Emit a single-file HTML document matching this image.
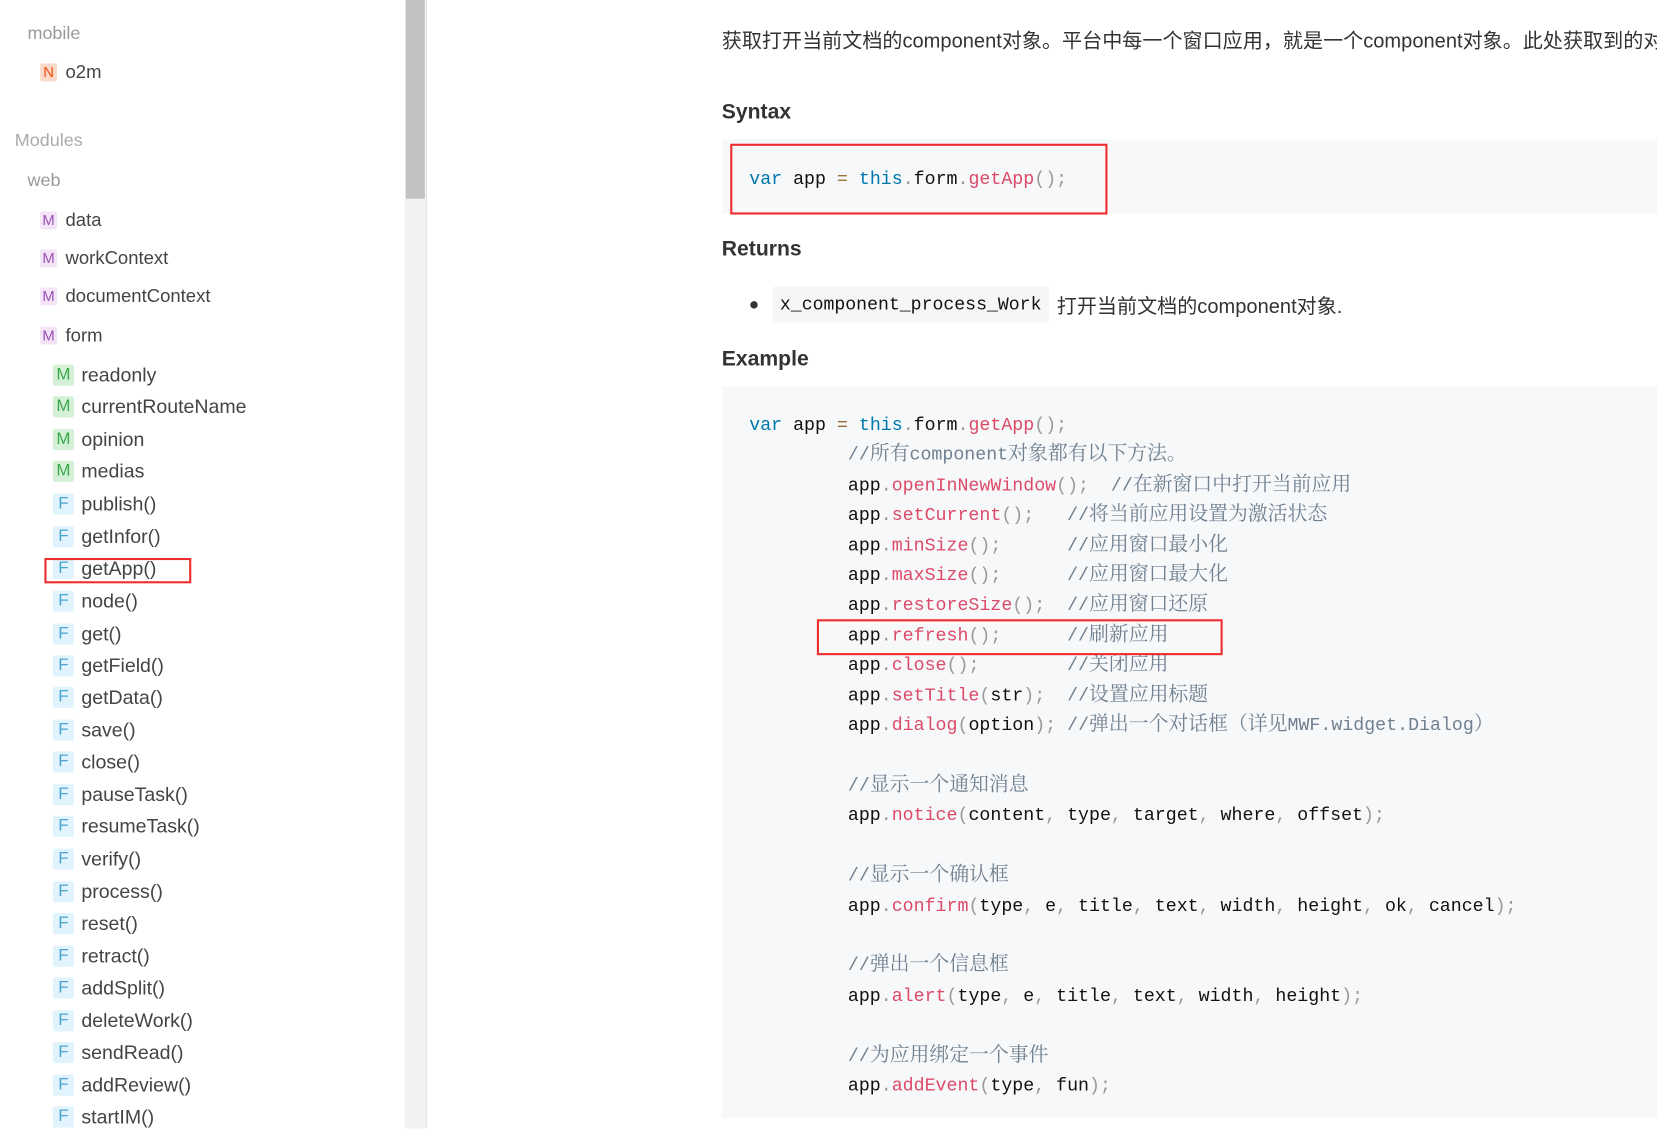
<!DOCTYPE html>
<html><head><meta charset="utf-8"><style>
html,body{margin:0;padding:0;background:#fff;overflow:hidden;width:1657px;height:1128px}
#w{position:absolute;left:0;top:0;width:1568px;height:1068px;transform:scale(1.05676);transform-origin:0 0;font-family:"Liberation Sans","Noto Sans CJK SC",sans-serif;color:#333;overflow:hidden}
.a{position:absolute;white-space:nowrap}
.g{color:#999;font-size:17px}
.it{font-size:17.5px;color:#444}
.ic{position:absolute;width:16px;height:17px;border-radius:2px;font-size:14px;text-align:center;line-height:17px}
.ic.m{background:#f3e5f7;color:#9c4fb6}
.ic.n{background:#fbd9c9;color:#ee4d0f}
.sub{font-size:18.5px;color:#444}
.ic2{position:absolute;width:20px;height:20px;border-radius:2px;font-size:16px;text-align:center;line-height:20px}
.ic2.g2{background:#d4f0d6;color:#3aa84a}
.ic2.f{background:#e1f4fd;color:#4ba3cf}
.rb{position:absolute;border:2px solid #ee2e2e;box-sizing:border-box}
.h{font-weight:bold;font-size:20px;color:#333}
pre,code{font-family:"Liberation Mono","Noto Sans CJK SC",monospace;margin:0}
.blk{position:absolute;left:683px;right:0;background:#f6f8fa}
pre.a{font-size:17.3px;line-height:28.4px;color:#111;white-space:pre}
.k{color:#0077aa}.f1{color:#dd4a68}.p{color:#999}.o{color:#9a6e3a}
.c{color:#708090;font-family:"Liberation Mono","Noto Serif CJK SC",serif;line-height:0}
.cj{font-family:"Noto Serif CJK SC",serif;font-size:18.8px;line-height:0}
</style></head><body><div id="w">
<!-- sidebar -->
<div class="a g" style="left:26px;top:22px">mobile</div>
<div class="ic n" style="left:38px;top:60px">N</div><div class="a it" style="left:62px;top:58px">o2m</div>
<div class="a g" style="left:14px;top:123px;color:#aaa">Modules</div>
<div class="a g" style="left:26px;top:161px">web</div>
<div class="ic m" style="left:38px;top:200px">M</div><div class="a it" style="left:62px;top:198px">data</div>
<div class="ic m" style="left:38px;top:236px">M</div><div class="a it" style="left:62px;top:234px">workContext</div>
<div class="ic m" style="left:38px;top:272px">M</div><div class="a it" style="left:62px;top:270px">documentContext</div>
<div class="ic m" style="left:38px;top:309px">M</div><div class="a it" style="left:62px;top:307px">form</div>

<div class="ic2 g2" style="left:50px;top:345px">M</div><div class="a sub" style="left:77px;top:344px">readonly</div>
<div class="ic2 g2" style="left:50px;top:375px">M</div><div class="a sub" style="left:77px;top:374px">currentRouteName</div>
<div class="ic2 g2" style="left:50px;top:406px">M</div><div class="a sub" style="left:77px;top:405px">opinion</div>
<div class="ic2 g2" style="left:50px;top:436px">M</div><div class="a sub" style="left:77px;top:435px">medias</div>
<div class="ic2 f" style="left:50px;top:467px">F</div><div class="a sub" style="left:77px;top:466px">publish()</div>
<div class="ic2 f" style="left:50px;top:498px">F</div><div class="a sub" style="left:77px;top:497px">getInfor()</div>
<div class="ic2 f" style="left:50px;top:528px">F</div><div class="a sub" style="left:77px;top:527px">getApp()</div>
<div class="ic2 f" style="left:50px;top:559px">F</div><div class="a sub" style="left:77px;top:558px">node()</div>
<div class="ic2 f" style="left:50px;top:590px">F</div><div class="a sub" style="left:77px;top:589px">get()</div>
<div class="ic2 f" style="left:50px;top:620px">F</div><div class="a sub" style="left:77px;top:619px">getField()</div>
<div class="ic2 f" style="left:50px;top:650px">F</div><div class="a sub" style="left:77px;top:649px">getData()</div>
<div class="ic2 f" style="left:50px;top:681px">F</div><div class="a sub" style="left:77px;top:680px">save()</div>
<div class="ic2 f" style="left:50px;top:711px">F</div><div class="a sub" style="left:77px;top:710px">close()</div>
<div class="ic2 f" style="left:50px;top:742px">F</div><div class="a sub" style="left:77px;top:741px">pauseTask()</div>
<div class="ic2 f" style="left:50px;top:772px">F</div><div class="a sub" style="left:77px;top:771px">resumeTask()</div>
<div class="ic2 f" style="left:50px;top:803px">F</div><div class="a sub" style="left:77px;top:802px">verify()</div>
<div class="ic2 f" style="left:50px;top:834px">F</div><div class="a sub" style="left:77px;top:833px">process()</div>
<div class="ic2 f" style="left:50px;top:864px">F</div><div class="a sub" style="left:77px;top:863px">reset()</div>
<div class="ic2 f" style="left:50px;top:895px">F</div><div class="a sub" style="left:77px;top:894px">retract()</div>
<div class="ic2 f" style="left:50px;top:925px">F</div><div class="a sub" style="left:77px;top:924px">addSplit()</div>
<div class="ic2 f" style="left:50px;top:956px">F</div><div class="a sub" style="left:77px;top:955px">deleteWork()</div>
<div class="ic2 f" style="left:50px;top:986px">F</div><div class="a sub" style="left:77px;top:985px">sendRead()</div>
<div class="ic2 f" style="left:50px;top:1017px">F</div><div class="a sub" style="left:77px;top:1016px">addReview()</div>
<div class="ic2 f" style="left:50px;top:1047px">F</div><div class="a sub" style="left:77px;top:1046px">startIM()</div>
<div class="rb" style="left:42px;top:528px;width:139px;height:24px"></div>
<!-- scrollbar -->
<div class="a" style="left:383px;top:0;width:20px;height:1068px;background:#f1f1f1;border-right:1px solid #e4e4e4"></div>
<div class="a" style="left:384px;top:0;width:18px;height:188px;background:#c1c1c1"></div>

<!-- content -->
<div class="a" style="left:683px;top:24px;font-size:19px;color:#333;width:885px;overflow:hidden">获取打开当前文档的component对象。平台中每一个窗口应用，就是一个component对象。此处获取到的对象可以调用</div>
<div class="a h" style="left:683px;top:95px">Syntax</div>
<div class="blk" style="top:132px;height:70px"></div>
<pre class="a" style="left:709px;top:157px"><span class="k">var</span> app <span class="o">=</span> <span class="k">this</span><span class="p">.</span>form<span class="p">.</span><span class="f1">getApp</span><span class="p">();</span></pre>
<div class="rb" style="left:691px;top:136px;width:357px;height:67px"></div>
<div class="a h" style="left:683px;top:225px">Returns</div>
<div class="a" style="left:710px;top:285px;width:7px;height:7px;border-radius:50%;background:#333"></div>
<div class="a" style="left:731px;top:271px;width:262px;height:34px;background:#f6f6f6;border-radius:3px"></div>
<code class="a" style="left:738px;top:280px;font-size:17.2px;color:#111">x_component_process_Work</code>
<div class="a" style="left:1000px;top:275px;font-size:19px;color:#333">打开当前文档的component对象.</div>
<div class="a h" style="left:683px;top:329px">Example</div>
<div class="blk" style="top:366px;height:692px"></div>
<pre class="a" style="left:709px;top:390px"><span class="k">var</span> app <span class="o">=</span> <span class="k">this</span><span class="p">.</span>form<span class="p">.</span><span class="f1">getApp</span><span class="p">();</span>
         <span class="c">//<span class="cj">所有</span>component<span class="cj">对象都有以下方法。</span></span>
         app<span class="p">.</span><span class="f1">openInNewWindow</span><span class="p">();</span>  <span class="c">//<span class="cj">在新窗口中打开当前应用</span></span>
         app<span class="p">.</span><span class="f1">setCurrent</span><span class="p">();</span>   <span class="c">//<span class="cj">将当前应用设置为激活状态</span></span>
         app<span class="p">.</span><span class="f1">minSize</span><span class="p">();</span>      <span class="c">//<span class="cj">应用窗口最小化</span></span>
         app<span class="p">.</span><span class="f1">maxSize</span><span class="p">();</span>      <span class="c">//<span class="cj">应用窗口最大化</span></span>
         app<span class="p">.</span><span class="f1">restoreSize</span><span class="p">();</span>  <span class="c">//<span class="cj">应用窗口还原</span></span>
         app<span class="p">.</span><span class="f1">refresh</span><span class="p">();</span>      <span class="c">//<span class="cj">刷新应用</span></span>
         app<span class="p">.</span><span class="f1">close</span><span class="p">();</span>        <span class="c">//<span class="cj">关闭应用</span></span>
         app<span class="p">.</span><span class="f1">setTitle</span><span class="p">(</span>str<span class="p">);</span>  <span class="c">//<span class="cj">设置应用标题</span></span>
         app<span class="p">.</span><span class="f1">dialog</span><span class="p">(</span>option<span class="p">);</span> <span class="c">//<span class="cj">弹出一个对话框（详见</span>MWF.widget.Dialog<span class="cj">）</span></span>

         <span class="c">//<span class="cj">显示一个通知消息</span></span>
         app<span class="p">.</span><span class="f1">notice</span><span class="p">(</span>content<span class="p">,</span> type<span class="p">,</span> target<span class="p">,</span> where<span class="p">,</span> offset<span class="p">);</span>

         <span class="c">//<span class="cj">显示一个确认框</span></span>
         app<span class="p">.</span><span class="f1">confirm</span><span class="p">(</span>type<span class="p">,</span> e<span class="p">,</span> title<span class="p">,</span> text<span class="p">,</span> width<span class="p">,</span> height<span class="p">,</span> ok<span class="p">,</span> cancel<span class="p">);</span>

         <span class="c">//<span class="cj">弹出一个信息框</span></span>
         app<span class="p">.</span><span class="f1">alert</span><span class="p">(</span>type<span class="p">,</span> e<span class="p">,</span> title<span class="p">,</span> text<span class="p">,</span> width<span class="p">,</span> height<span class="p">);</span>

         <span class="c">//<span class="cj">为应用绑定一个事件</span></span>
         app<span class="p">.</span><span class="f1">addEvent</span><span class="p">(</span>type<span class="p">,</span> fun<span class="p">);</span></pre>
<div class="rb" style="left:773px;top:586px;width:384px;height:34px"></div>
</div></body></html>
